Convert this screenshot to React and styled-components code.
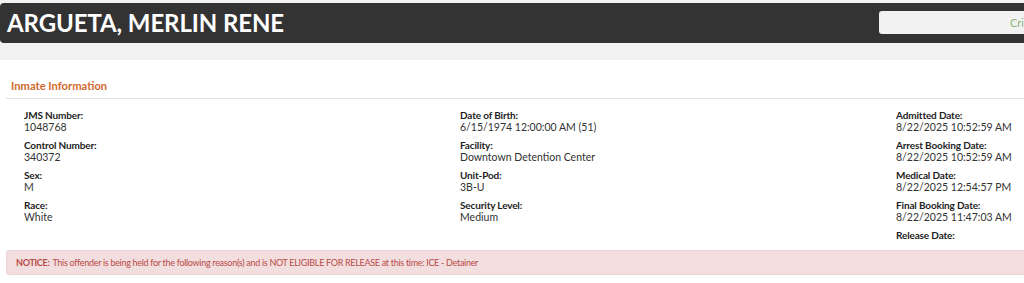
import React from "react";
import styled, { createGlobalStyle } from "styled-components";

const GlobalStyle = createGlobalStyle`
  html, body {
    margin: 0;
    padding: 0;
    background: #f2f2f2;
    overflow: hidden;
  }
  body {
    font-family: Lato, "Open Sans", sans-serif;
    color: #333;
  }
`;

const columns = [
  [
    ["JMS Number:", "1048768"],
    ["Control Number:", "340372"],
    ["Sex:", "M"],
    ["Race:", "White"],
  ],
  [
    ["Date of Birth:", "6/15/1974 12:00:00 AM (51)"],
    ["Facility:", "Downtown Detention Center"],
    ["Unit-Pod:", "3B-U"],
    ["Security Level:", "Medium"],
  ],
  [
    ["Admitted Date:", "8/22/2025 10:52:59 AM"],
    ["Arrest Booking Date:", "8/22/2025 10:52:59 AM"],
    ["Medical Date:", "8/22/2025 12:54:57 PM"],
    ["Final Booking Date:", "8/22/2025 11:47:03 AM"],
    ["Release Date:", ""],
  ],
];

const App = () => {
  return (
    <Page>
      <GlobalStyle />
      <TopStrip>
        <HeaderBar>
          <Title>ARGUETA, MERLIN RENE</Title>
          <SearchBox>
            <SearchText>Cri</SearchText>
          </SearchBox>
        </HeaderBar>
      </TopStrip>

      <Panel>
        <PanelHeading>Inmate Information</PanelHeading>
        <InfoGrid>
          {columns.map((col, i) => (
            <Column key={i}>
              {col.map(([label, value]) => (
                <Field key={label}>
                  <Label>{label}</Label>
                  {value && <Value>{value}</Value>}
                </Field>
              ))}
            </Column>
          ))}
        </InfoGrid>
        <Notice>
          <strong>NOTICE:</strong> This offender is being held for the following
          reason(s) and is NOT ELIGIBLE FOR RELEASE at this time: ICE - Detainer
        </Notice>
      </Panel>
    </Page>
  );
};

export default App;

const Page = styled.div`
  width: 1318px;
  min-height: 283px;
  background: #fff;
`;

const TopStrip = styled.div`
  background: #f2f2f2;
  padding: 3px 0 17px;
`;

const HeaderBar = styled.div`
  height: 40px;
  background: #333333;
  border-radius: 4px;
  display: grid;
  grid-template-columns: 879px 1fr;
  align-items: center;
`;

const Title = styled.h1`
  margin: 0;
  padding: 0 0 1px 7px;
  font-size: 24px;
  font-weight: 700;
  color: #fff;
  line-height: 40px;
  letter-spacing: -0.1px;
  white-space: nowrap;
`;

const SearchBox = styled.div`
  height: 23px;
  margin-top: -3px;
  margin-right: 20px;
  background: #f2f2f2;
  border-radius: 3px;
  display: flex;
  align-items: center;
  padding-left: 131px;
  overflow: hidden;
`;

const SearchText = styled.span`
  font-size: 11px;
  color: #8db37b;
  white-space: nowrap;
`;

const Panel = styled.div`
  background: #fff;
  padding-bottom: 10px;
`;

const PanelHeading = styled.div`
  margin: 0 0 0 6px;
  padding: 19px 5px 5px;
  font-size: 11.2px;
  font-weight: 700;
  color: #d2692c;
  border-bottom: 1px solid #e3e3e3;
  line-height: 14px;
`;

const InfoGrid = styled.div`
  display: grid;
  grid-template-columns: 436px 436px 436px;
  padding: 10px 0 0 24px;
`;

const Column = styled.div`
  display: flex;
  flex-direction: column;
  gap: 6px;
`;

const Field = styled.div`
  display: flex;
  flex-direction: column;
`;

const Label = styled.div`
  font-size: 10px;
  font-weight: 700;
  line-height: 12px;
  letter-spacing: -0.15px;
  color: #1e1e1e;
`;

const Value = styled.div`
  font-size: 10.5px;
  line-height: 12px;
  color: #333;
`;

const Notice = styled.div`
  margin: 9px 0 0 6px;
  padding: 0 9px;
  height: 23px;
  display: flex;
  align-items: center;
  background: #f2dede;
  border: 1px solid #eed3d7;
  border-radius: 3px;
  color: #b94a48;
  font-size: 9px;
  letter-spacing: -0.3px;
  white-space: nowrap;

  strong {
    font-weight: 700;
    margin-right: 3px;
  }
`;
